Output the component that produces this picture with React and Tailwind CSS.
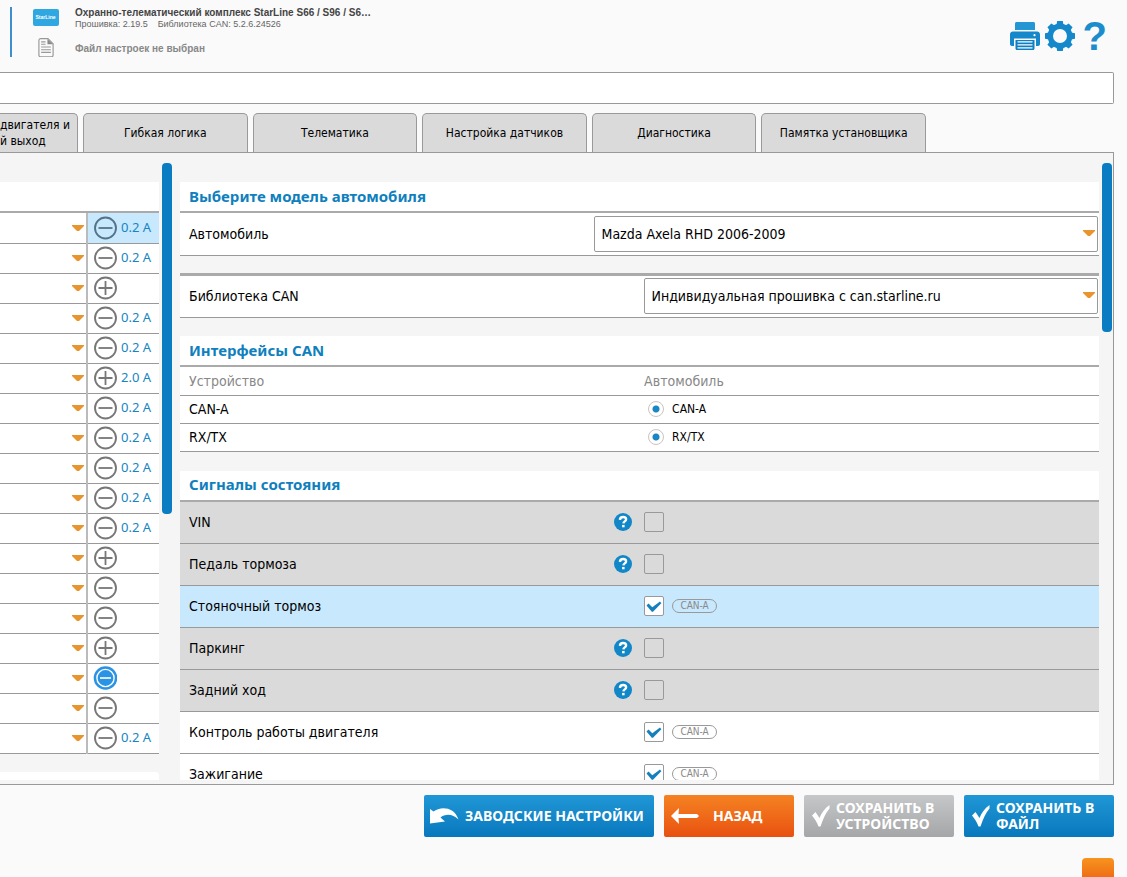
import { useState } from 'react';
import clsx from 'clsx';

const TABS = ['Гибкая логика', 'Телематика', 'Настройка датчиков', 'Диагностика', 'Памятка установщика'];

const OUTPUTS = [
  { sign: '-', current: '0.2 А', selected: true },
  { sign: '-', current: '0.2 А' },
  { sign: '+' },
  { sign: '-', current: '0.2 А' },
  { sign: '-', current: '0.2 А' },
  { sign: '+', current: '2.0 А' },
  { sign: '-', current: '0.2 А' },
  { sign: '-', current: '0.2 А' },
  { sign: '-', current: '0.2 А' },
  { sign: '-', current: '0.2 А' },
  { sign: '-', current: '0.2 А' },
  { sign: '+' },
  { sign: '-' },
  { sign: '-' },
  { sign: '+' },
  { sign: '-', active: true },
  { sign: '-' },
  { sign: '-', current: '0.2 А' },
];

const SIGNALS = [
  { id: 'vin', label: 'VIN', help: true },
  { id: 'brake', label: 'Педаль тормоза', help: true },
  { id: 'handbrake', label: 'Стояночный тормоз', source: 'CAN-A', selected: true },
  { id: 'parking', label: 'Паркинг', help: true },
  { id: 'reverse', label: 'Задний ход', help: true },
  { id: 'engine', label: 'Контроль работы двигателя', source: 'CAN-A' },
  { id: 'ignition', label: 'Зажигание', source: 'CAN-A' },
];

function Caret({ className }) {
  return (
    <svg viewBox="0 0 12 6" className={clsx('w-3 h-[6px]', className)} aria-hidden="true">
      <path d="M0 0h12v1L7 6H5L0 1z" fill="#e8952f" />
    </svg>
  );
}

function PolarityIcon({ sign, active, selected }) {
  if (active) {
    return (
      <svg viewBox="0 0 24 24" className="w-6 h-6" aria-hidden="true">
        <circle cx="12.500" cy="12" r="11.800" fill="#2b93e3" />
        <circle cx="12.500" cy="12" r="8.600" fill="none" stroke="#fff" strokeWidth="1.400" />
        <path d="M7 12h11" stroke="#fff" strokeWidth="1.600" />
      </svg>
    );
  }
  return (
    <svg viewBox="0 0 24 24" className="w-6 h-6" fill="none" stroke={selected ? '#52738a' : '#777'} aria-hidden="true">
      <circle cx="12.500" cy="12" r="10.500" strokeWidth="1.900" />
      <path d={sign === '+' ? 'M5.500 12h14M12.500 5v14' : 'M5.500 12h14'} strokeWidth="1.800" />
    </svg>
  );
}

function HelpIcon() {
  return (
    <svg viewBox="0 0 18 18" className="w-[18px] h-[18px] block" aria-hidden="true">
      <circle cx="9" cy="9" r="9" fill="#1187c8" />
      <path d="M5.9 6.9C6 4.9 7.3 4 9.1 4c1.8 0 3 .9 3 2.4 0 2-2.6 2-2.7 4" fill="none" stroke="#fff" strokeWidth="2.4" />
      <path d="M8.1 11.9h2.5v2.4H8.100z" fill="#fff" />
    </svg>
  );
}

function PrinterIcon() {
  return (
    <svg viewBox="0 0 30 28" className="w-[30px] h-7" aria-hidden="true">
      <path d="M5 8V1.5C5 .6 5.6 0 6.500 0h17C24.400 0 25 .6 25 1.500V8z" fill="#2596d4" />
      <path d="M3 9.500h24c1.700 0 3 1.300 3 3V22c0 1.200-.8 2-2 2h-2v-7.500H4V24H2c-1.200 0-2-.8-2-2v-9.500c0-1.700 1.300-3 3-3z" fill="#1488ca" />
      <circle cx="24.500" cy="13.200" r="1.100" fill="#fff" />
      <path d="M5.500 18h19v8.500c0 .9-.6 1.500-1.500 1.500H7c-.9 0-1.500-.6-1.500-1.500z" fill="#0d7fc3" />
      <path d="M7.500 19.800h15M7.500 22.800h15M7.500 25.800h15" stroke="#fff" strokeWidth="1.300" />
    </svg>
  );
}

const GEAR_TEETH = [0, 45, 90, 135, 180, 225, 270, 315];

function GearIcon() {
  return (
    <svg viewBox="0 0 30 30" className="w-[30px] h-[30px]" aria-hidden="true">
      <circle cx="15" cy="15" r="9.700" fill="none" stroke="#1488ca" strokeWidth="5.400" />
      {GEAR_TEETH.map((angle) => (
        <path key={angle} d="M11.300 5 12.200 0h5.600l.9 5z" fill="#1488ca" transform={`rotate(${angle} 15 15)`} />
      ))}
    </svg>
  );
}

function DocumentIcon() {
  return (
    <svg viewBox="0 0 16 20" className="w-4 h-5" fill="none" stroke="#999" aria-hidden="true">
      <path d="M2.500.7H10l5.300 5.300v11.500c0 1-.8 1.800-1.800 1.800h-11c-1 0-1.800-.8-1.800-1.800v-15c0-1 .8-1.800 1.800-1.800z" strokeWidth="1.200" />
      <path d="M9.500 1v5.500H15z" fill="#888" stroke="none" />
      <path d="M3 4h4.500M3 6.500h4.500M3 9.200h10M3 12h10M3 14.800h10" strokeWidth="1.100" />
    </svg>
  );
}

function CheckIcon({ className }) {
  return (
    <svg viewBox="0 0 18 22" className={className} aria-hidden="true">
      <path d="M0 10.500 3.500 7 7.500 13C9.500 8 12.500 3.500 17.500 0v3.500C13.500 8.500 11 14 8.500 21.500H6.500C5 17.500 3 14 0 10.500z" fill="#fff" />
    </svg>
  );
}

function SectionTitle({ children }) {
  return (
    <h2 className="h-[31px] px-[9px] flex items-center bg-white border-b-2 border-[#aaa] font-['Noto_Sans',sans-serif] text-[15px] font-bold text-[#0f7fbd]">
      {children}
    </h2>
  );
}

function SelectBox({ id, value, className }) {
  return (
    <div className={clsx('relative', className)}>
      <select
        id={id}
        defaultValue={value}
        className="appearance-none w-full h-9 pl-[7px] pr-6 bg-white border border-[#999] rounded-xs text-sm text-black"
      >
        <option>{value}</option>
      </select>
      <Caret className="absolute right-[3px] top-[14px] pointer-events-none" />
    </div>
  );
}

function OutputsTable() {
  return (
    <div className="w-[159px] shrink-0 pt-[29px]">
      <div className="h-[31px] bg-white border-b-2 border-[#aaa]"></div>
      <table className="w-full table-fixed border-collapse bg-white">
        <tbody>
          {OUTPUTS.map(({ sign, current, selected, active }, index) => (
            <tr key={index} className="h-[30px] border-b border-[#999]">
              <td className="w-[87px] p-0 border-r-2 border-r-[#bbb]">
                <button type="button" aria-label="Выбрать функцию" className="w-full h-[29px] pr-[2px] flex items-center justify-end">
                  <Caret />
                </button>
              </td>
              <td className={clsx('p-0', selected && 'bg-[#c8e8fd]')}>
                <div className="flex items-center gap-1 pl-[5px]">
                  <button type="button" aria-label="Полярность">
                    <PolarityIcon sign={sign} active={active} selected={selected} />
                  </button>
                  <span className="font-['Noto_Sans',sans-serif] text-[13px] text-[#1585c4]">{current}</span>
                </div>
              </td>
            </tr>
          ))}
        </tbody>
      </table>
      <div className="h-10 mt-[18px] bg-white rounded-tr-sm"></div>
    </div>
  );
}

function CanInterfaces() {
  return (
    <table className="w-full table-fixed border-collapse bg-white text-sm text-left">
      <thead>
        <tr className="h-7 border-b border-[#999] text-[#888]">
          <th className="w-[50.5%] p-0 pl-[9px] font-normal">Устройство</th>
          <th className="p-0 font-normal">Автомобиль</th>
        </tr>
      </thead>
      <tbody>
        {['CAN-A', 'RX/TX'].map((name) => (
          <tr key={name} className="h-7 border-b border-[#999]">
            <td className="p-0 pl-[9px]">{name}</td>
            <td className="p-0 pl-1">
              <label className="flex items-center gap-2 text-xs">
                <input
                  type="radio"
                  name={name}
                  defaultChecked
                  className="appearance-none w-4 h-4 rounded-full border border-[#c9c4c2] bg-[radial-gradient(circle,#1a86c2_3px,white_4px)]"
                />
                {name}
              </label>
            </td>
          </tr>
        ))}
      </tbody>
    </table>
  );
}

function SignalRow({ id, label, help, source, selected }) {
  const [checked, setChecked] = useState(!!source);

  return (
    <tr className={clsx('h-[42px] border-b border-[#999]', selected ? 'bg-[#c8e8fd]' : help ? 'bg-[#dadada]' : 'bg-white')}>
      <td className="w-[50.5%] p-0 pb-px pl-[9px] pr-3">
        <div className="flex items-center justify-between">
          <label htmlFor={id}>{label}</label>
          {help && (
            <button type="button" aria-label={`Справка: ${label}`}>
              <HelpIcon />
            </button>
          )}
        </div>
      </td>
      <td className="p-0 pb-px">
        <div className="flex items-center gap-2">
          <span className="relative">
            <input
              id={id}
              type="checkbox"
              checked={checked}
              onChange={(e) => setChecked(e.target.checked)}
              className="appearance-none block w-5 h-5 border border-[#999] rounded-xs checked:bg-white"
            />
            {checked && (
              <svg viewBox="0 0 16 12" className="absolute left-[2px] top-[5px] w-4 h-3 pointer-events-none" aria-hidden="true">
                <path d="M.5 4.500 2.500 2.600 6.300 6.300 14 .6l1.300 1.600L7 10.800H5.800z" fill="#1680bd" />
              </svg>
            )}
          </span>
          {source && (
            <span className="w-[45px] h-[14px] flex items-center justify-center border border-[#999] rounded-full text-[10px] leading-3 text-[#888]">
              {source}
            </span>
          )}
        </div>
      </td>
    </tr>
  );
}

function SettingsPane() {
  return (
    <div className="flex-1 min-w-0 pt-[29px] text-sm text-black">
      <SectionTitle>Выберите модель автомобиля</SectionTitle>
      <div className="h-[43px] pl-[9px] pr-px flex items-center justify-between bg-white border-b border-[#999]">
        <label htmlFor="car">Автомобиль</label>
        <SelectBox id="car" value="Mazda Axela RHD 2006-2009" className="w-[55.5%]" />
      </div>
      <div className="mt-[17px] h-[45px] pl-[9px] pr-px pb-px flex items-center justify-between bg-white border-t-3 border-t-[#aaa] border-b border-b-[#999]">
        <label htmlFor="library">Библиотека CAN</label>
        <SelectBox id="library" value="Индивидуальная прошивка с can.starline.ru" className="w-1/2" />
      </div>

      <div className="mt-[18px]">
        <SectionTitle>Интерфейсы CAN</SectionTitle>
        <CanInterfaces />
      </div>

      <div className="mt-[19px]">
        <SectionTitle>Сигналы состояния</SectionTitle>
        <table className="w-full table-fixed border-collapse">
          <tbody>
            {SIGNALS.map((signal) => (
              <SignalRow key={signal.id} {...signal} />
            ))}
          </tbody>
        </table>
      </div>
    </div>
  );
}

export default function App() {
  return (
    <div className="h-screen min-h-[600px] flex flex-col overflow-hidden bg-[#fafafa] font-['DejaVu_Sans_Condensed','Noto_Sans',sans-serif]">
      <header className="h-[72px] shrink-0 pl-[10px] pr-5 flex items-start justify-between font-['Liberation_Sans',sans-serif]">
        <div className="mt-[7px] h-[50px] pl-5 flex gap-4 border-l-2 border-[#3d8fce]">
          <div className="w-[27px] flex flex-col items-center gap-3">
            <span className="mt-[2px] w-[26px] h-[17px] flex items-center justify-center rounded-xs bg-[#2fa8e1] text-[5px] font-bold text-white">
              StarLine
            </span>
            <DocumentIcon />
          </div>
          <div className="text-[#888]">
            <p className="text-[10px] leading-3 font-bold text-[#444]">Охранно-телематический комплекс StarLine S66 / S96 / S6…</p>
            <p className="text-[9px] leading-[10px] text-[#666] flex gap-[10px]">
              <span>Прошивка: 2.19.5</span>
              <span>Библиотека CAN: 5.2.6.24526</span>
            </p>
            <p className="mt-[14px] text-[10px] leading-3 font-bold">Файл настроек не выбран</p>
          </div>
        </div>
        <div className="mt-[21px] h-[30px] flex items-center gap-[5px]">
          <button type="button" aria-label="Печать"><PrinterIcon /></button>
          <button type="button" aria-label="Настройки"><GearIcon /></button>
          <button type="button" aria-label="Справка" className="w-[27px] text-right text-[40px] leading-[30px] font-bold text-[#1b8ccc]">?</button>
        </div>
      </header>

      <div className="pr-[13px] shrink-0">
        <input
          type="text"
          aria-label="Поиск"
          className="block w-full h-8 px-2 bg-white border border-l-0 border-[#999] rounded-r-xs"
        />
      </div>

      <nav className="mt-[9px] h-[39px] shrink-0 mr-[201px] flex gap-[5px] text-xs text-black">
        <button
          type="button"
          className="w-[78px] shrink-0 overflow-hidden text-left whitespace-nowrap leading-4 bg-[#dadada] border border-l-0 border-b-0 border-[#999] rounded-tr-[5px]"
        >
          двигателя и<br />й выход
        </button>
        <div className="flex-1 grid grid-cols-5 gap-[5px]">
          {TABS.map((tab) => (
            <button
              key={tab}
              type="button"
              className="whitespace-nowrap bg-[#dadada] border border-b-0 border-[#999] rounded-t-[5px]"
            >
              {tab}
            </button>
          ))}
        </div>
      </nav>

      <div className="flex-1 min-h-0 mr-[13px] pb-1 bg-[#f5f5f5] border border-l-0 border-[#999]">
        <main className="h-full flex overflow-hidden">
          <OutputsTable />
          <div className="mt-[10px] ml-[3px] mr-2 w-[10px] h-[56%] shrink-0 rounded-sm bg-[#0a7dc2]"></div>
          <SettingsPane />
          <div className="mt-[10px] ml-[3px] mr-px w-[10px] h-[27%] shrink-0 rounded-sm bg-[#0a7dc2]"></div>
        </main>
      </div>

      <footer className="h-[92px] shrink-0 pt-[10px] pr-[13px] flex flex-col items-end overflow-hidden font-['Noto_Sans',sans-serif] text-sm font-bold text-white">
        <div className="h-[42px] shrink-0 flex gap-[10px]">
          <button type="button" className="w-[230px] pl-[6px] flex items-center gap-[6px] rounded-xs bg-linear-to-b from-[#1f97d6] to-[#0878bd]">
            <svg viewBox="0 0 29 16" className="w-[29px] h-4" aria-hidden="true">
              <path d="M0 1 3.500 3.500C10-1.500 24-2 28.500 11.500 23 5.500 15 5.500 10.500 9.500l4.500 4L0 15.500z" fill="#fff" />
            </svg>
            ЗАВОДСКИЕ НАСТРОЙКИ
          </button>
          <button type="button" className="w-[130px] pl-[7px] flex items-center gap-[14px] rounded-xs bg-linear-to-b from-[#f58222] to-[#e85010]">
            <svg viewBox="0 0 28 16" className="w-7 h-4" aria-hidden="true">
              <path d="M0 8 8 0 7.500 6h18.500l2 2-2 2H7.500l.5 6z" fill="#fff" />
            </svg>
            НАЗАД
          </button>
          <button type="button" disabled className="w-[150px] pl-2 flex items-center gap-[6px] rounded-xs text-left leading-4 bg-linear-to-b from-[#c6c7c8] to-[#a5a6a7]">
            <CheckIcon className="w-[18px] h-[22px] shrink-0" />
            СОХРАНИТЬ В УСТРОЙСТВО
          </button>
          <button type="button" className="w-[150px] pl-2 flex items-center gap-[6px] rounded-xs text-left leading-4 bg-linear-to-b from-[#1f97d6] to-[#0878bd]">
            <CheckIcon className="w-[18px] h-[22px] shrink-0" />
            СОХРАНИТЬ В ФАЙЛ
          </button>
        </div>
        <button
          type="button"
          aria-label="Открыть чат"
          className="mt-[21px] w-8 h-8 shrink-0 rounded-sm bg-linear-to-b from-[#f7941e] to-[#e85010]"
        ></button>
      </footer>
    </div>
  );
}
